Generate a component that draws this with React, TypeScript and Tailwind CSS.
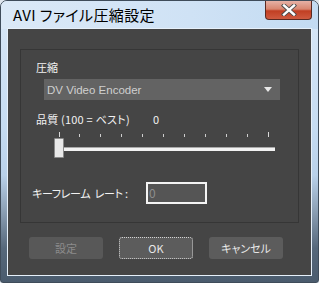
import React from "react";

const jp = "font-['Noto_Sans_CJK_JP',sans-serif] [font-feature-settings:'palt']";

function CloseX() {
  return (
    <svg width="16" height="12" viewBox="0 0 16 12">
      <path d="M3 1.5 L13 10.5 M13 1.5 L3 10.5" stroke="#4a4a4a" strokeWidth="4.2" strokeLinecap="square" />
      <path d="M3 1.5 L13 10.5 M13 1.5 L3 10.5" stroke="#ffffff" strokeWidth="2.4" strokeLinecap="square" />
    </svg>
  );
}

function Slider() {
  const ticks = Array.from({ length: 11 }, (_, i) => i);
  return (
    <div className="relative ml-[33px] mt-[4px] w-[221px] h-[28px]">
      {ticks.map((i) => {
        const x = 4.5 + (i * 209) / 10;
        const tall = i === 0 || i === 10;
        return (
          <div
            key={i}
            className={tall ? "absolute w-px bg-[#d8d8d8] top-[1px] h-[5px]" : "absolute w-px bg-[#cfcfcf] top-[3px] h-[3px]"}
            style={{ left: Math.round(x) }}
          />
        );
      })}
      <div className="absolute left-[2px] right-0 top-[16px] h-[4px] bg-[#f2f2f2] border-t border-[#a9a9a9]" />
      <div className="absolute left-0 top-[7px] w-[10px] h-[20px] bg-[#e9e9e9] border border-[#8a8a8a] rounded-[1px]" />
    </div>
  );
}

export default function App() {
  return (
    <div className="w-[319px] h-[283px] bg-[#dfe6ee] overflow-hidden">
      <div className="relative w-[319px] h-[283px] rounded-t-[7px] rounded-b-[3px] border border-[#3f4c5a] bg-[linear-gradient(180deg,#d9e8f7_0%,#c6dcf2_45%,#b9d1ea_62%,#8fa3b8_74%,#56687b_88%,#4a5b6d_100%)] flex flex-col">
        <div className="h-[28px] flex items-center pl-[12px] bg-[linear-gradient(90deg,#dbe9f7_0%,#cfe2f5_60%,#c3dbf2_100%)] rounded-t-[6px]">
          <span className={`${jp} text-[15px] leading-none text-black tracking-[0.4px] -mt-[2px]`}>AVI ファイル圧縮設定</span>
        </div>
        <div className="absolute right-[6px] top-0 w-[47px] h-[19px] rounded-b-[4px] border border-t-0 border-[#5a2a22] bg-[linear-gradient(180deg,#e6b1a5_0%,#d88670_45%,#c13f23_55%,#cf5a3f_100%)] flex items-center justify-center">
          <CloseX />
        </div>
        <div className="mx-[7px] w-[303px] h-[246px] bg-[#454545] shadow-[0_0_0_1px_#e6f0fa] flex flex-col">
          <div className={`${jp} ml-[12px] mt-[20px] w-[279px] h-[174px] border border-[#363636] flex flex-col text-[11px] leading-[16px] text-[#f2f2f2]`}>
            <div className="mt-[9px] pl-[15px]">圧縮</div>
            <div className="mt-[4px] ml-[23px] w-[236px] h-[21px] bg-[#636363] flex items-center justify-between pl-[3px] pr-[8px]">
              <span className="font-['Liberation_Sans',sans-serif] text-[11.5px] text-[#cfcfcf] [font-feature-settings:normal]">DV Video Encoder</span>
              <svg width="8" height="5" viewBox="0 0 8 5">
                <path d="M0 0 H8 L4 5 Z" fill="#e8e8e8" />
              </svg>
            </div>
            <div className="mt-[11px] pl-[15px] flex">
              <span className="w-[117px] tracking-[0.2px]">品質 (100 = ベスト)</span>
              <span>0</span>
            </div>
            <Slider />
            <div className="mt-[23px] pl-[11px] flex items-center">
              <span className="w-[114px] tracking-[-0.3px] whitespace-pre">キーフレーム  レート :</span>
              <div className="w-[61px] h-[22px] border-2 border-[#f4f4f4] bg-[#555555] flex items-center pl-[1px]">
                <span className="text-[#8e8e8e] text-[12px]">0</span>
              </div>
            </div>
          </div>
          <div className={`${jp} mt-[14px] pl-[21px] flex gap-[16px] text-[11px]`}>
            <div className="w-[74px] h-[22px] rounded-[3px] bg-[#585858] flex items-center justify-center text-[#8c8c8c]">設定</div>
            <div className="w-[74px] h-[22px] rounded-[3px] bg-[#5c5c5c] border border-dotted border-[#d4d4d4] flex items-center justify-center text-[#e8e8e8]">OK</div>
            <div className="w-[74px] h-[22px] rounded-[3px] bg-[#5c5c5c] flex items-center justify-center text-[#e8e8e8]">キャンセル</div>
          </div>
        </div>
      </div>
    </div>
  );
}
